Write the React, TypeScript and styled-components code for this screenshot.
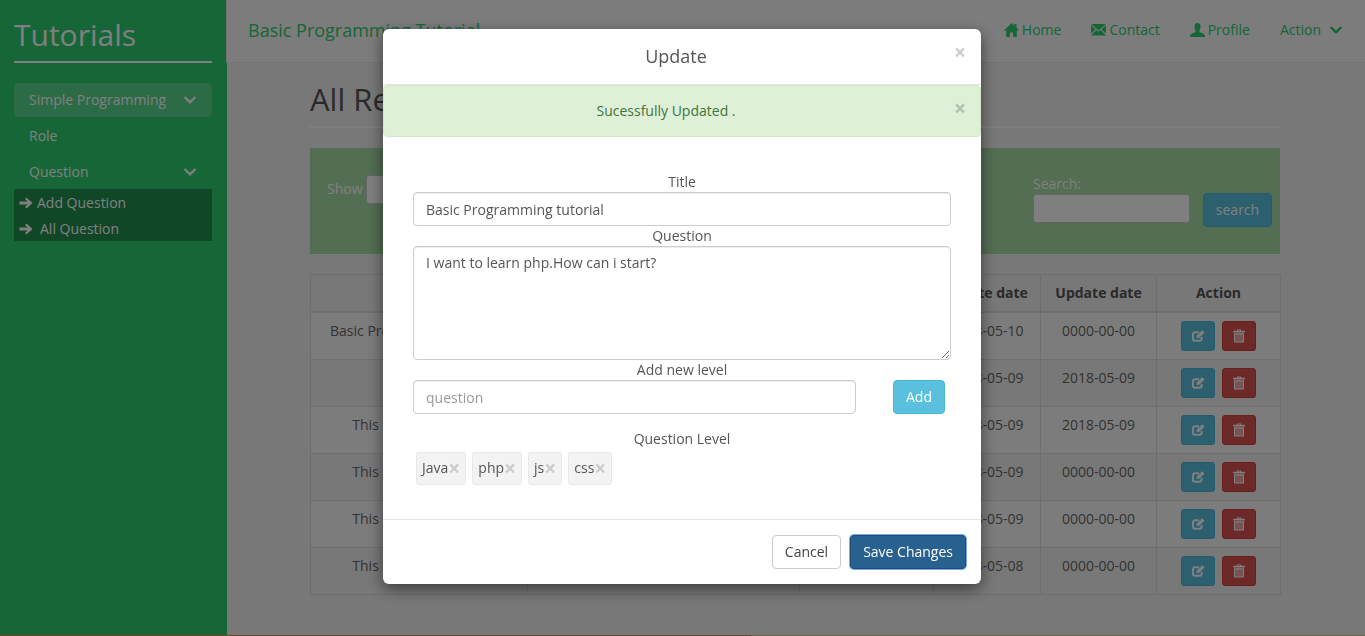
import React from 'react';
import styled, { createGlobalStyle } from 'styled-components';

const GlobalStyle = createGlobalStyle`
  html, body {
    margin: 0;
    padding: 0;
    height: 100%;
    overflow: hidden;
    background: #f0f0f0;
    font-family: 'Open Sans', 'Liberation Sans', sans-serif;
    font-size: 14px;
    line-height: 20px;
    color: #555;
  }
  * {
    box-sizing: border-box;
  }
`;

const Page = styled.div`
  display: flex;
  height: 636px;
  overflow: hidden;
`;

const Sidebar = styled.aside`
  flex: 0 0 227px;
  padding: 0 15px 0 14px;
  background: #2ecc71;
  color: #fff;
`;

const Logo = styled.h2`
  margin: 0;
  height: 63px;
  padding-top: 14px;
  border-bottom: 2px solid #fff;
  font-size: 30px;
  font-weight: 400;
  line-height: 42px;
`;

const SideList = styled.div`
  margin-top: 20px;
`;

const SideItem = styled.div<{ $active?: boolean }>`
  display: flex;
  align-items: center;
  justify-content: space-between;
  height: ${(p) => (p.$active ? '34px' : '36px')};
  padding: 0 15px;
  border-radius: 4px;
  background: ${(p) => (p.$active ? 'rgba(255, 255, 255, 0.2)' : 'transparent')};
  margin-bottom: ${(p) => (p.$active ? '1px' : '0')};
`;

const SubMenu = styled.div`
  height: 52px;
  margin-top: -1px;
  padding-top: 1px;
  background: rgba(0, 0, 0, 0.3);
`;

const SubItem = styled.div<{ $gap: number }>`
  display: flex;
  align-items: center;
  gap: ${(p) => p.$gap}px;
  height: 26px;
  padding-left: 5px;
`;

const Main = styled.div`
  flex: 1;
  min-width: 0;
`;

const Navbar = styled.nav`
  display: flex;
  align-items: center;
  justify-content: space-between;
  height: 63px;
  margin-left: -1px;
  padding: 0 22px 2px 21px;
  background: #f8f8f8;
  border: 1px solid #e7e7e7;
  border-width: 0 0 1px 1px;
  color: #2ecc71;
`;

const Brand = styled.div`
  font-size: 18px;
`;

const NavLinks = styled.div`
  display: flex;
  align-items: center;
  gap: 30px;
`;

const NavLink = styled.div<{ $gap?: number }>`
  display: flex;
  align-items: center;
  gap: ${(p) => p.$gap ?? 3}px;
`;

const Content = styled.main`
  width: 970px;
  margin-left: 83px;
`;

const PageHeader = styled.div`
  height: 65px;
  padding-top: 16px;
  border-bottom: 2px solid #fff;
`;

const Heading = styled.h1`
  margin: 0;
  font-size: 31px;
  font-weight: 400;
  line-height: 40px;
`;

const FilterPanel = styled.div`
  display: flex;
  justify-content: space-between;
  height: 106px;
  margin-top: 20px;
  padding: 27px 8px 0 17px;
  background: #a6dca6;
  color: #fff;
`;

const ShowGroup = styled.div`
  display: flex;
  align-items: flex-start;
  gap: 3px;
  padding-top: 4px;
`;

const ShowSelect = styled.div`
  width: 60px;
  height: 29px;
  margin-top: -4px;
  background: #fff;
  border: 1px solid #ccc;
  border-radius: 3px;
`;

const SearchGroup = styled.div`
  display: flex;
  align-items: flex-end;
  gap: 13px;
  height: 52px;
`;

const SearchField = styled.label`
  display: flex;
  flex-direction: column;
  margin-bottom: 4px;
`;

const SearchInput = styled.div`
  width: 157px;
  height: 29px;
  background: #fff;
  border: 1px solid #ccc;
  border-radius: 3px;
`;

const SearchButton = styled.div`
  display: flex;
  align-items: center;
  justify-content: center;
  width: 69px;
  height: 34px;
  background: #5bc0de;
  border: 1px solid #46b8da;
  border-radius: 4px;
`;

const Table = styled.table`
  width: 970px;
  margin-top: 20px;
  table-layout: fixed;
  border-collapse: collapse;
  text-align: center;
  color: #666;
`;

const Th = styled.th`
  height: 37px;
  padding: 8px;
  border: 1px solid #ddd;
  border-bottom-width: 2px;
  font-weight: 700;
  color: #555;
`;

const Row = styled.tr`
  height: 47px;
  &:nth-child(odd) {
    background: #f9f9f9;
  }
`;

const Td = styled.td`
  padding: 8px;
  border: 1px solid #ddd;
  vertical-align: top;
`;

const ActionCell = styled.div`
  display: flex;
  justify-content: center;
  gap: 7px;
`;

const IconButton = styled.div<{ $color: string; $border: string }>`
  display: flex;
  align-items: center;
  justify-content: center;
  width: 34px;
  height: 30px;
  background: ${(p) => p.$color};
  border: 1px solid ${(p) => p.$border};
  border-radius: 3px;
  color: #fff;
`;

const FooterStrip = styled.div`
  position: fixed;
  left: 0;
  right: 0;
  bottom: 0;
  height: 1px;
  background: linear-gradient(to right, #d9913f 0, #d9913f 751px, #d6c47e 751px, #d6c47e 100%);
`;

const Backdrop = styled.div`
  position: fixed;
  inset: 0;
  background: rgba(0, 0, 0, 0.5);
`;

const Modal = styled.div`
  position: fixed;
  top: 29px;
  left: 383px;
  width: 598px;
  height: 555px;
  background: #fff;
  border-radius: 6px;
  box-shadow: 0 5px 15px rgba(0, 0, 0, 0.5);
`;

const ModalHeader = styled.div`
  display: flex;
  align-items: center;
  height: 56px;
  padding: 0 15px 2px;
  border-bottom: 1px solid #e5e5e5;
`;

const ModalTitle = styled.h4`
  flex: 1;
  margin: 0;
  font-size: 18px;
  font-weight: 400;
  text-align: center;
  color: #555;
`;

const Close = styled.span`
  font-size: 21px;
  font-weight: 700;
  line-height: 1;
  color: #000;
  opacity: 0.2;
`;

const HeaderClose = styled(Close)`
  margin-bottom: 6px;
`;

const Alert = styled.div`
  position: relative;
  height: 52px;
  padding: 15px 47px 15px 15px;
  background: #dff0d8;
  border: 1px solid #d6e9c6;
  border-radius: 4px;
  color: #3c763d;
  text-align: center;
`;

const AlertClose = styled(Close)`
  position: absolute;
  top: 12px;
  right: 14px;
`;

const ModalBody = styled.div`
  height: 383px;
  padding: 35px 30px 0;
  border-bottom: 1px solid #e5e5e5;
`;

const FieldLabel = styled.label`
  display: block;
  height: 20px;
  text-align: center;
  color: #555;
`;

const TextInput = styled.input`
  display: block;
  width: 100%;
  height: 34px;
  padding: 6px 12px;
  background: #fff;
  border: 1px solid #ccc;
  border-radius: 4px;
  box-shadow: inset 0 1px 1px rgba(0, 0, 0, 0.075);
  font: inherit;
  color: #555;
  &::placeholder {
    color: #999;
  }
`;

const TextArea = styled.textarea`
  display: block;
  width: 100%;
  height: 114px;
  padding: 6px 12px;
  background: #fff;
  border: 1px solid #ccc;
  border-radius: 4px;
  box-shadow: inset 0 1px 1px rgba(0, 0, 0, 0.075);
  font: inherit;
  color: #555;
`;

const AddRow = styled.div`
  display: flex;
  gap: 37px;
  padding-right: 6px;
`;

const AddInput = styled.div`
  flex: 0 0 443px;
`;

const AddButton = styled.button`
  width: 52px;
  height: 34px;
  padding: 0;
  background: #5bc0de;
  border: 1px solid #46b8da;
  border-radius: 4px;
  font: inherit;
  color: #fff;
`;

const LevelLabel = styled(FieldLabel)`
  margin-top: 15px;
`;

const Tags = styled.div`
  display: flex;
  gap: 6px;
  margin: 3px 0 0 3px;
`;

const Tag = styled.div`
  display: flex;
  align-items: center;
  height: 33px;
  padding: 0 5px 2px;
  background: #f3f3f3;
  border: 1px solid #e8e8e8;
  border-radius: 3px;
  color: #555;
`;

const TagRemove = styled.span`
  font-size: 21px;
  font-weight: 700;
  line-height: 20px;
  color: #ccc;
`;

const ModalFooter = styled.div`
  display: flex;
  justify-content: flex-end;
  gap: 9px;
  padding: 15px;
`;

const Button = styled.button<{ $primary?: boolean }>`
  height: 34px;
  padding: 0 12px;
  background: ${(p) => (p.$primary ? '#286090' : '#fff')};
  border: 1px solid ${(p) => (p.$primary ? '#204d74' : '#ccc')};
  border-radius: 4px;
  box-shadow: ${(p) => (p.$primary ? '0 0 0 1px #7aa7e8' : 'none')};
  font: inherit;
  color: ${(p) => (p.$primary ? '#fff' : '#444')};
`;

const Chevron = ({ size = 14 }: { size?: number }) => (
  <svg width={size} height={size * 0.7} viewBox="0 0 14 10" fill="none">
    <path d="M1.5 2 L7 7.5 L12.5 2" stroke="currentColor" strokeWidth="2.4" />
  </svg>
);

const ArrowRight = () => (
  <svg width="14" height="12" viewBox="0 0 14 12" fill="currentColor">
    <path d="M7.5 0.5 L13.5 6 L7.5 11.5 L6 10 L8.6 7.4 H0.5 V4.6 H8.6 L6 2 Z" />
  </svg>
);

const HomeIcon = () => (
  <svg width="15" height="14" viewBox="0 0 15 14" fill="currentColor">
    <path d="M7.5 0 L10.5 2.8 V1 H12.5 V4.7 L15 7.4 H12.8 V14 H9.1 V9.4 H5.9 V14 H2.2 V7.4 H0 Z" />
  </svg>
);

const EnvelopeIcon = () => (
  <svg width="15" height="12" viewBox="0 0 15 12" fill="currentColor">
    <path d="M0 0 H15 L7.5 6.4 Z" />
    <path d="M0 1.2 L4.6 5.2 L0 9.8 Z" />
    <path d="M15 1.2 L10.4 5.2 L15 9.8 Z" />
    <path d="M5.3 5.9 L7.5 7.8 L9.7 5.9 L15 11.5 H0 Z" />
  </svg>
);

const UserIcon = () => (
  <svg width="15" height="14" viewBox="0 0 15 14" fill="currentColor">
    <path d="M7.5 0 C9.6 0 10.6 1.6 10.5 3.8 C10.4 5.6 9.7 7 9.3 7.6 C9.2 8.6 9.8 9.2 11 9.8 C13 10.6 14.4 11.2 15 12.2 V14 H0 V12.2 C0.6 11.2 2 10.6 4 9.8 C5.2 9.2 5.8 8.6 5.7 7.6 C5.3 7 4.6 5.6 4.5 3.8 C4.4 1.6 5.4 0 7.5 0 Z" />
  </svg>
);

const EditIcon = () => (
  <svg width="13" height="12" viewBox="0 0 13 12" fill="none" stroke="currentColor">
    <path d="M9.6 7 V8.8 A2 2 0 0 1 7.6 10.8 H3 A2 2 0 0 1 1 8.8 V4.2 A2 2 0 0 1 3 2.2 H7" strokeWidth="2" />
    <path d="M4.6 7.8 L5.2 5.2 L10.2 0.4 L12.4 2.6 L7.4 7.4 Z" fill="currentColor" strokeWidth="0.4" />
  </svg>
);

const TrashIcon = () => (
  <svg width="12" height="14" viewBox="0 0 12 14" fill="currentColor">
    <path d="M4 0.5 H8 V1.8 H11.8 V3.4 H0.2 V1.8 H4 Z M5 1.2 V1.8 H7 V1.2 Z" fillRule="evenodd" />
    <path d="M1 4.2 H11 V13.5 H1 Z M2.5 5.4 V12.4 H3.5 V5.4 Z M4.5 5.4 V12.4 H5.5 V5.4 Z M6.5 5.4 V12.4 H7.5 V5.4 Z M8.5 5.4 V12.4 H9.5 V5.4 Z" fillRule="evenodd" />
  </svg>
);

const columns = [217, 272, 134, 107, 116, 124];

const rows = [
  ['Basic Programming tutorial', 'I want to learn php.How can i start?', 'Java', '2018-05-10', '0000-00-00'],
  ['', 'What is programming?', 'php', '2018-05-09', '2018-05-09'],
  ['This is a demo title 1', 'This is question', 'js', '2018-05-09', '2018-05-09'],
  ['This is a demo title 2', 'This is question', 'css', '2018-05-09', '0000-00-00'],
  ['This is a demo title 3', 'This is question', 'js', '2018-05-09', '0000-00-00'],
  ['This is a demo title 4', 'This is question', 'php', '2018-05-08', '0000-00-00'],
];

const tags = ['Java', 'php', 'js', 'css'];

const App = () => (
  <>
    <GlobalStyle />
    <Page>
      <Sidebar>
        <Logo>Tutorials</Logo>
        <SideList>
          <SideItem $active>
            Simple Programming <Chevron />
          </SideItem>
          <SideItem>Role</SideItem>
          <SideItem>
            Question <Chevron />
          </SideItem>
          <SubMenu>
            <SubItem $gap={4}>
              <ArrowRight /> Add Question
            </SubItem>
            <SubItem $gap={7}>
              <ArrowRight /> All Question
            </SubItem>
          </SubMenu>
        </SideList>
      </Sidebar>
      <Main>
        <Navbar>
          <Brand>Basic Programming Tutorial</Brand>
          <NavLinks>
            <NavLink>
              <HomeIcon /> Home
            </NavLink>
            <NavLink>
              <EnvelopeIcon /> Contact
            </NavLink>
            <NavLink>
              <UserIcon /> Profile
            </NavLink>
            <NavLink $gap={8}>
              Action <Chevron />
            </NavLink>
          </NavLinks>
        </Navbar>
        <Content>
          <PageHeader>
            <Heading>All Record</Heading>
          </PageHeader>
          <FilterPanel>
            <ShowGroup>
              Show <ShowSelect />
            </ShowGroup>
            <SearchGroup>
              <SearchField>
                Search:
                <SearchInput />
              </SearchField>
              <SearchButton>search</SearchButton>
            </SearchGroup>
          </FilterPanel>
          <Table>
            <colgroup>
              {columns.map((w, i) => (
                <col key={i} width={w} />
              ))}
            </colgroup>
            <thead>
              <tr>
                <Th>Title</Th>
                <Th>Question</Th>
                <Th>Level</Th>
                <Th>Create date</Th>
                <Th>Update date</Th>
                <Th>Action</Th>
              </tr>
            </thead>
            <tbody>
              {rows.map((row, i) => (
                <Row key={i}>
                  {row.map((cell, j) => (
                    <Td key={j}>{cell}</Td>
                  ))}
                  <Td>
                    <ActionCell>
                      <IconButton $color="#5bc0de" $border="#46b8da">
                        <EditIcon />
                      </IconButton>
                      <IconButton $color="#d9534f" $border="#d43f3a">
                        <TrashIcon />
                      </IconButton>
                    </ActionCell>
                  </Td>
                </Row>
              ))}
            </tbody>
          </Table>
        </Content>
      </Main>
    </Page>
    <FooterStrip />
    <Backdrop />
    <Modal>
      <ModalHeader>
        <ModalTitle>Update</ModalTitle>
        <HeaderClose>×</HeaderClose>
      </ModalHeader>
      <Alert>
        Sucessfully Updated .<AlertClose>×</AlertClose>
      </Alert>
      <ModalBody>
        <FieldLabel>Title</FieldLabel>
        <TextInput defaultValue="Basic Programming tutorial" />
        <FieldLabel>Question</FieldLabel>
        <TextArea defaultValue="I want to learn php.How can i start?" />
        <FieldLabel>Add new level</FieldLabel>
        <AddRow>
          <AddInput>
            <TextInput placeholder="question" />
          </AddInput>
          <AddButton>Add</AddButton>
        </AddRow>
        <LevelLabel>Question Level</LevelLabel>
        <Tags>
          {tags.map((tag) => (
            <Tag key={tag}>
              {tag}
              <TagRemove>×</TagRemove>
            </Tag>
          ))}
        </Tags>
      </ModalBody>
      <ModalFooter>
        <Button>Cancel</Button>
        <Button $primary>Save Changes</Button>
      </ModalFooter>
    </Modal>
  </>
);

export default App;
